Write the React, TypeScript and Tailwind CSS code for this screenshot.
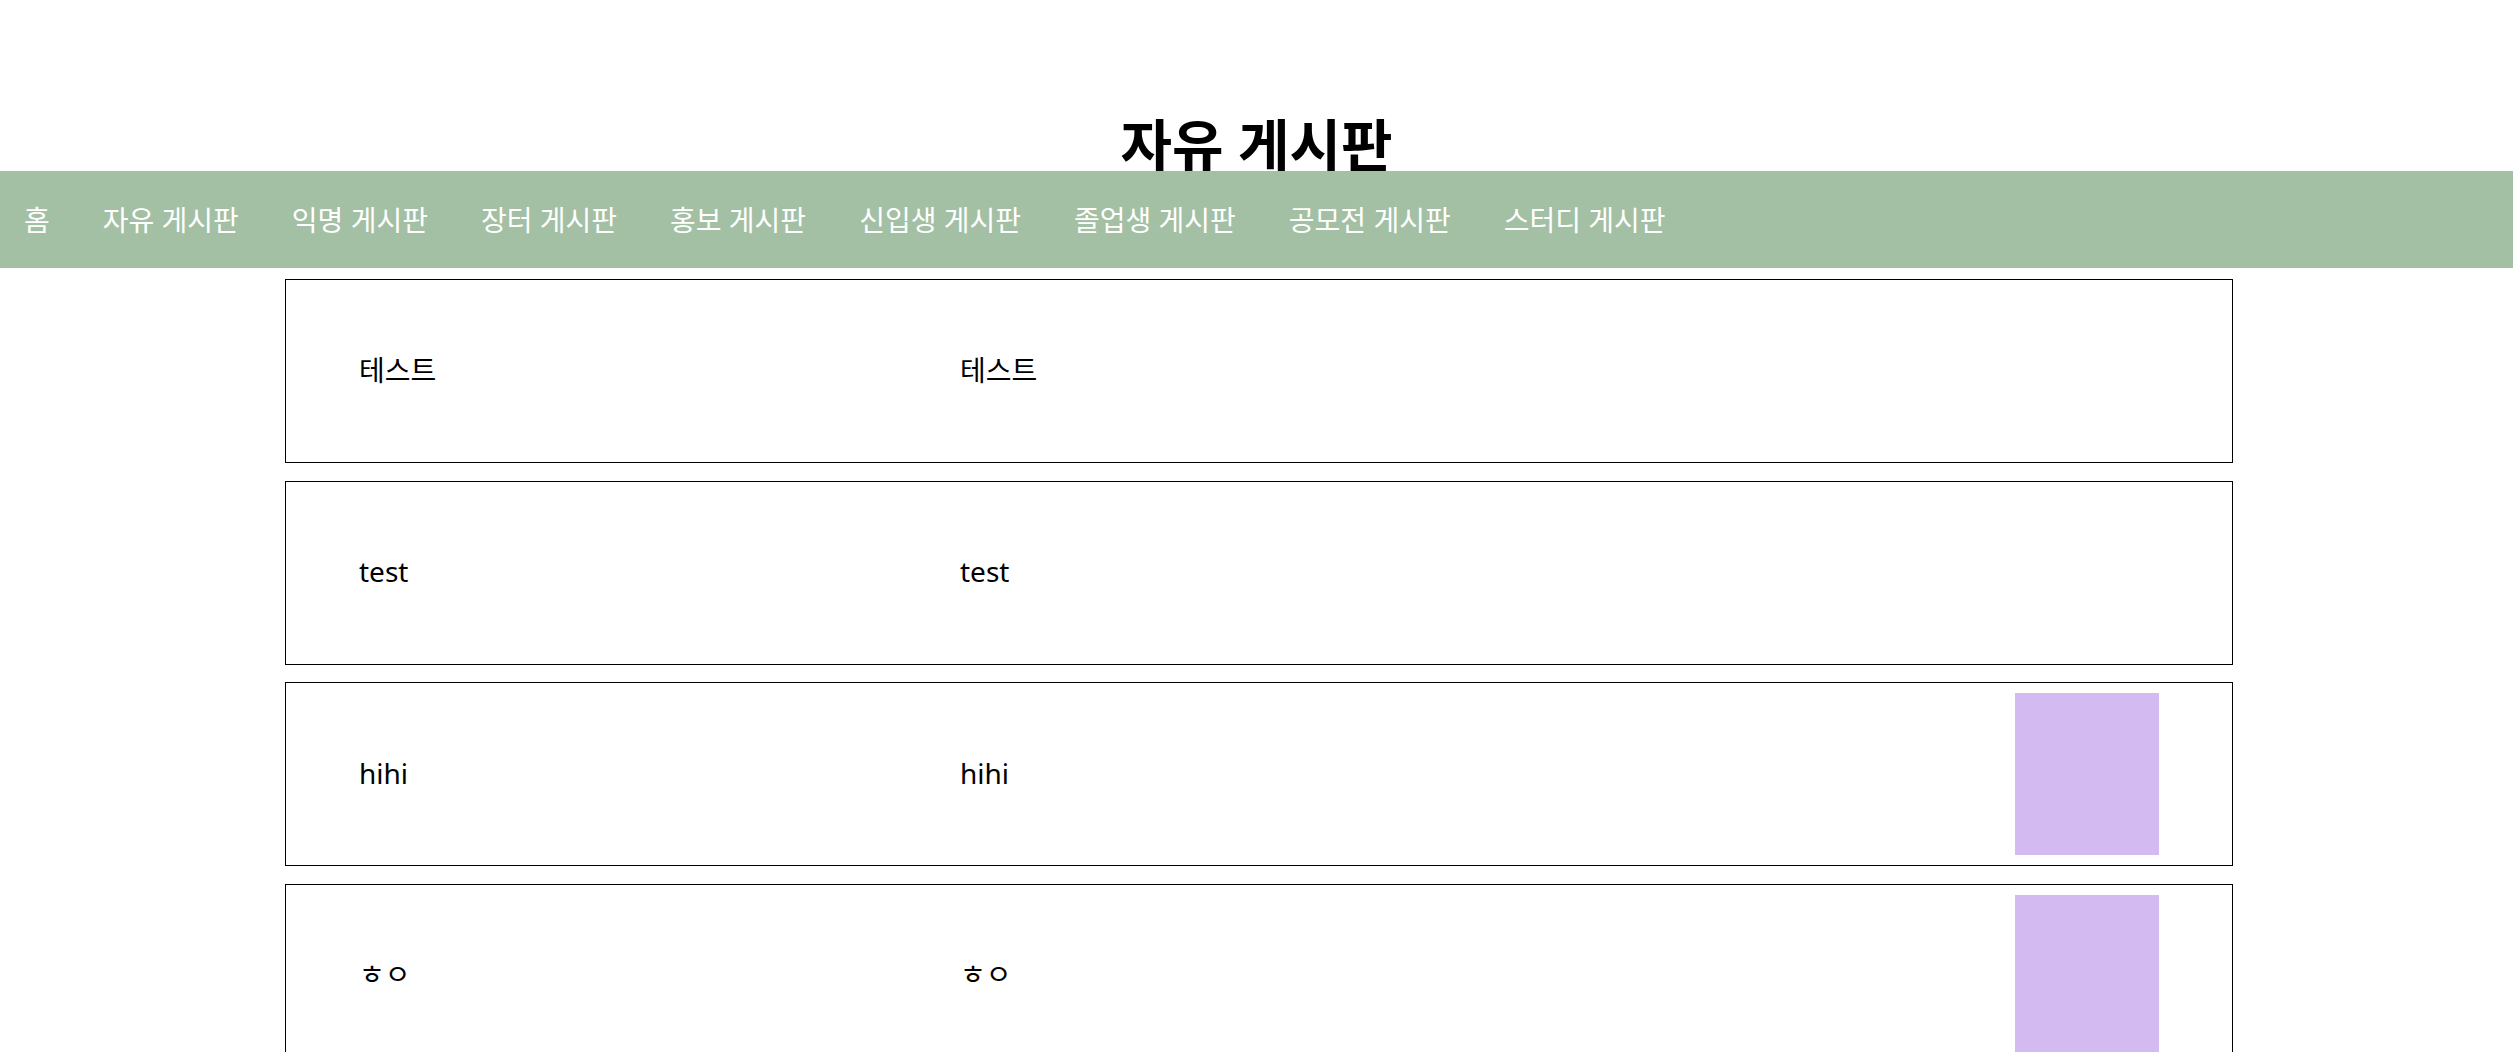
const menus = ["홈", "자유 게시판", "익명 게시판", "장터 게시판", "홍보 게시판", "신입생 게시판", "졸업생 게시판", "공모전 게시판", "스터디 게시판"];

type Post = { title: string; content: string; hasImage: boolean };

const posts: Post[] = [
  { title: "테스트", content: "테스트", hasImage: false },
  { title: "test", content: "test", hasImage: false },
  { title: "hihi", content: "hihi", hasImage: true },
  { title: "ㅎㅇ", content: "ㅎㅇ", hasImage: true },
];

function PostCard({ post }: { post: Post }) {
  return (
    <div className="flex items-center h-[184px] border border-black px-[73px] py-[10px]">
      <div className="w-[601px] pb-[3px] text-[28px] text-black">{post.title}</div>
      <div className="flex-1 pb-[3px] text-[28px] text-black">{post.content}</div>
      {post.hasImage && <div className="w-[144px] h-[162px] bg-[#d3bbf2]" />}
    </div>
  );
}

export default function App() {
  return (
    <div className="min-h-screen bg-white font-['Noto_Sans','Noto_Sans_CJK_KR',sans-serif]">
      {/* Title */}
      <div className="h-[171px] pt-[116px] text-center">
        <h1 className="text-[56px] leading-none font-bold text-black">자유 게시판</h1>
      </div>

      {/* Board menu */}
      <nav className="relative h-[97px] bg-[#a3c0a4] flex items-center pl-[24px] gap-[53px]">
        {menus.map((m) => (
          <a key={m} className="text-[28px] text-white whitespace-nowrap cursor-pointer">
            {m}
          </a>
        ))}
      </nav>

      {/* Post list */}
      <div className="ml-[285px] w-[1948px] mt-[11px] flex flex-col gap-[17.5px]">
        {posts.map((p, i) => (
          <PostCard key={i} post={p} />
        ))}
      </div>
    </div>
  );
}
